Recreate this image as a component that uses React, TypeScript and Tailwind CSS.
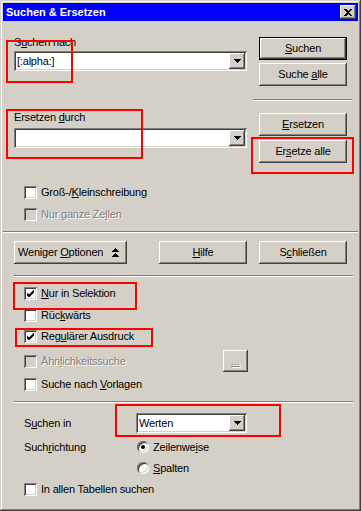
import type { ReactNode } from "react";

const raised =
  "shadow-[inset_-1px_-1px_0_#404040,inset_1px_1px_0_#ffffff,inset_-2px_-2px_0_#808080,inset_2px_2px_0_#d4d0c8]";
const sunken =
  "shadow-[inset_1px_1px_0_#808080,inset_-1px_-1px_0_#ffffff,inset_2px_2px_0_#404040,inset_-2px_-2px_0_#d4d0c8]";
const disabledText = "text-[#808080] [text-shadow:1px_1px_0_#ffffff]";

function U({ children }: { children: ReactNode }) {
  return <span className="underline decoration-1 underline-offset-[1px]">{children}</span>;
}

function Btn({
  children,
  className = "",
  isDefault = false,
  align = "center",
}: {
  children: ReactNode;
  className?: string;
  isDefault?: boolean;
  align?: "center" | "left";
}) {
  const inner = (
    <div
      className={`flex h-full w-full items-center bg-[#d4d0c8] ${raised} ${
        align === "center" ? "justify-center" : "justify-between pl-[4px] pr-[8px]"
      }`}
    >
      {children}
    </div>
  );
  if (isDefault) {
    return <div className={`h-[23px] border border-black ${className}`}>{inner}</div>;
  }
  return <div className={`h-[23px] ${className}`}>{inner}</div>;
}

function Separator({ className = "" }: { className?: string }) {
  return <div className={`h-[2px] border-t border-t-[#808080] border-b border-b-white ${className}`} />;
}

function Arrow() {
  return (
    <svg width="7" height="4" viewBox="0 0 7 4" shapeRendering="crispEdges">
      <path d="M0 0h7L3.5 4z" fill="#000" />
    </svg>
  );
}

function Combo({ value = "", className = "" }: { value?: string; className?: string }) {
  return (
    <div className={`flex h-[20px] items-center bg-white p-[2px] ${sunken} ${className}`}>
      <span className="flex-1 pl-[1px] text-[11px] leading-[13px]">{value}</span>
      <div className={`flex h-[16px] w-[16px] items-center justify-center bg-[#d4d0c8] ${raised}`}>
        <Arrow />
      </div>
    </div>
  );
}

function Check({ checked = false, disabled = false }: { checked?: boolean; disabled?: boolean }) {
  return (
    <div
      className={`flex h-[13px] w-[13px] shrink-0 items-center justify-center ${
        disabled ? "bg-[#d4d0c8]" : "bg-white"
      } ${sunken}`}
    >
      {checked && (
        <svg width="7" height="7" viewBox="0 0 7 7">
          <path d="M0 2.5L2 4.5L7 -0.5V2.5L2 7.5L0 5.5Z" fill="#000" />
        </svg>
      )}
    </div>
  );
}

function CheckRow({
  children,
  checked,
  disabled,
  className = "",
}: {
  children: ReactNode;
  checked?: boolean;
  disabled?: boolean;
  className?: string;
}) {
  return (
    <div className={`flex h-[13px] items-center gap-[4px] ${className}`}>
      <Check checked={checked} disabled={disabled} />
      <span className={`text-[11px] leading-[13px] ${disabled ? disabledText : ""}`}>{children}</span>
    </div>
  );
}

function Radio({ checked = false }: { checked?: boolean }) {
  return (
    <div className={`flex h-[12px] w-[12px] shrink-0 items-center justify-center rounded-full bg-white ${sunken}`}>
      {checked && <div className="h-[4px] w-[4px] rounded-full bg-black" />}
    </div>
  );
}

const marks = [
  "left-[6px] top-[40px] w-[67px] h-[43px]",
  "left-[6px] top-[109px] w-[137px] h-[50px]",
  "left-[251px] top-[137px] w-[103px] h-[37px]",
  "left-[13px] top-[282px] w-[124px] h-[28px]",
  "left-[15px] top-[328px] w-[138px] h-[19px]",
  "left-[115px] top-[404px] w-[166px] h-[33px]",
];

export default function App() {
  return (
    <div
      className={`relative h-[511px] w-[361px] bg-[#d4d0c8] p-[3px] font-['Liberation_Sans',Arial,sans-serif] text-[11px] leading-[13px] tracking-[-0.2px] text-black shadow-[inset_-1px_-1px_0_#404040,inset_1px_1px_0_#d4d0c8,inset_-2px_-2px_0_#808080,inset_2px_2px_0_#ffffff]`}
    >
      {/* title bar */}
      <div className="flex h-[18px] items-center bg-[#0000ff] pl-[3px] pr-[2px]">
        <span className="flex-1 text-[11px] font-bold leading-[18px] tracking-normal text-white">
          Suchen &amp; Ersetzen
        </span>
        <div className={`flex h-[14px] w-[16px] items-center justify-center bg-[#d4d0c8] ${raised}`}>
          <svg width="8" height="7" viewBox="0 0 8 7" shapeRendering="crispEdges">
            <path d="M0 0h2l2 2 2-2h2L5 3.5 8 7H6L4 5 2 7H0l3-3.5z" fill="#000" />
          </svg>
        </div>
      </div>

      {/* search / replace */}
      <div className="flex pl-[11px]">
        <div className="flex w-[233px] flex-col pt-[15px]">
          <span>
            S<U>u</U>chen nach
          </span>
          <Combo value="[:alpha:]" className="mt-[2px]" />
          <span className="mt-[40px]">
            Ersetzen <U>d</U>urch
          </span>
          <Combo className="mt-[4px]" />
        </div>
        <div className="ml-[6px] flex w-[99px] flex-col pt-[16px]">
          <Btn isDefault className="mx-[6px] w-[88px]">
            <span>
              <U>S</U>uchen
            </span>
          </Btn>
          <Btn className="mx-[6px] mt-[3px] w-[88px]">
            <span>
              Suche <U>a</U>lle
            </span>
          </Btn>
          <Separator className="mt-[13px]" />
          <Btn className="mx-[6px] mt-[12px] w-[88px]">
            <span>
              <U>E</U>rsetzen
            </span>
          </Btn>
          <Btn className="mx-[6px] mt-[4px] w-[88px]">
            <span>
              Er<U>s</U>etze alle
            </span>
          </Btn>
        </div>
      </div>

      {/* case options */}
      <div className="flex flex-col pl-[21px]">
        <CheckRow className="mt-[23px]">
          Groß-/<U>K</U>leinschreibung
        </CheckRow>
        <CheckRow disabled className="mt-[9px]">
          Nur ganze Ze<U>l</U>len
        </CheckRow>
      </div>

      <Separator className="mt-[10px]" />

      {/* main buttons */}
      <div className="mt-[8px] flex pl-[11px]">
        <Btn align="left" className="w-[113px]">
          <span>
            Weniger <U>O</U>ptionen
          </span>
          <svg width="7" height="10" viewBox="0 0 7 10" shapeRendering="crispEdges">
            <path d="M0 4L3.5 0L7 4z M0 9L3.5 5L7 9z" fill="#000" />
          </svg>
        </Btn>
        <Btn className="ml-[32px] w-[88px]">
          <span>
            <U>H</U>ilfe
          </span>
        </Btn>
        <Btn className="ml-[12px] w-[88px]">
          <span>
            S<U>c</U>hließen
          </span>
        </Btn>
      </div>

      <Separator className="ml-[11px] mt-[11px] w-[339px]" />

      {/* extra options */}
      <div className="flex flex-col pl-[21px]">
        <CheckRow checked className="mt-[10px]">
          <U>N</U>ur in Selektion
        </CheckRow>
        <CheckRow className="mt-[9px]">
          Rüc<U>k</U>wärts
        </CheckRow>
        <CheckRow checked className="mt-[8px]">
          Reg<U>u</U>lärer Ausdruck
        </CheckRow>
        <div className="mt-[7px] flex h-[22px] w-[224px] items-center justify-between">
          <CheckRow disabled>
            Ähn<U>l</U>ichkeitssuche
          </CheckRow>
          <div className={`flex h-[22px] w-[25px] items-center justify-center bg-[#d4d0c8] ${raised}`}>
            <span className={disabledText}>
              <U>...</U>
            </span>
          </div>
        </div>
        <CheckRow className="mt-[6px]">
          Suche nach <U>V</U>orlagen
        </CheckRow>
      </div>

      <Separator className="ml-[11px] mt-[10px] w-[339px]" />

      {/* search in */}
      <div className="flex flex-col pl-[21px]">
        <div className="mt-[10px] flex items-center">
          <span className="w-[112px]">
            S<U>u</U>chen in
          </span>
          <Combo value="Werten" className="w-[111px]" />
        </div>
        <div className="mt-[8px] flex h-[12px] items-center">
          <span className="w-[113px]">
            Such<U>r</U>ichtung
          </span>
          <Radio checked />
          <span className="ml-[4px]">
            Zeilenwe<U>i</U>se
          </span>
        </div>
        <div className="mt-[9px] flex h-[12px] items-center pl-[113px]">
          <Radio />
          <span className="ml-[4px]">
            <U>S</U>palten
          </span>
        </div>
        <CheckRow className="mt-[9px]">In allen Tabellen suchen</CheckRow>
      </div>

      {/* annotation marks */}
      {marks.map((m) => (
        <div key={m} className={`pointer-events-none absolute border-2 border-[#ff0000] ${m}`} />
      ))}
    </div>
  );
}
